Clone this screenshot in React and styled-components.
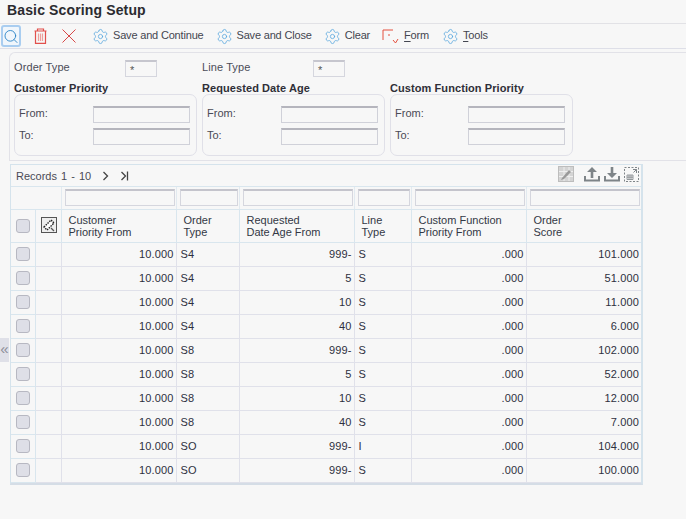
import React from "react";
import styled, { createGlobalStyle } from "styled-components";
import { Settings, Search } from "lucide-react";

const Global = createGlobalStyle`
  html, body { margin: 0; padding: 0; background: #f7f7f7; }
  body { font-family: "Liberation Sans", Arial, sans-serif; font-size: 11px; color: #3a3a44; }
`;
const Page = styled.div`
  position: relative; width: 686px; height: 519px; overflow: hidden; background: #f7f7f7;
`;
const TitleBar = styled.div`
  height: 24px; box-sizing: border-box; padding: 2px 0 0 7px;
  border-bottom: 1px solid #e2e2e6;
  font-size: 14px; font-weight: 700; line-height: 17px; letter-spacing: .14px; color: #2b2b30;
`;
const Toolbar = styled.div`
  display: flex; align-items: center; height: 25px; box-sizing: border-box;
  border-bottom: 1px solid #dedfe8;
`;
const IconBtn = styled.div`
  width: ${p => p.$w}px; height: 22px; margin-left: ${p => p.$ml || 0}px; flex: none;
  display: flex; align-items: center; justify-content: center; box-sizing: border-box;
  ${p => p.$active && `border: 2px solid #a9cdf0; border-radius: 3px; background: #f0f6fc;`}
`;
const Action = styled.div`
  display: flex; align-items: center; margin-left: ${p => p.$ml}px; flex: none;
  line-height: 14px; color: #444650; letter-spacing: -.18px;
  svg { margin-right: ${p => p.$gap}px; }
  span { margin-top: -3px; }
  u { text-underline-offset: 2px; }
`;
const FormPanel = styled.div`
  margin: 3px 0 0 9px; height: 109px; box-sizing: border-box; position: relative;
  border: 1px solid #e2e2e8; border-right: 0; border-top-left-radius: 6px;
  padding: 6px 0 0 4px;
`;
const TopRow = styled.div`
  display: flex; height: 18px; align-items: center;
`;
const TopField = styled.div`
  display: flex; width: 188px; align-items: center;
`;
const TopLabel = styled.span`
  width: 111px; flex: none; color: #4b4c58; letter-spacing: .1px; margin-top: -3px;
`;
const SmallInput = styled.div`
  width: 32px; height: 17px; box-sizing: border-box; border: 1px solid #d5d6de; border-top: 2px solid #c6c6ce;
  background: #f7f7f7; padding: 2px 0 0 4px; line-height: 12px; font-size: 11px; color: #555;
`;
const Groups = styled.div`
  display: flex; gap: 5px; margin-top: 4px;
`;
const Group = styled.div`
  width: 183px; flex: none;
`;
const GroupTitle = styled.div`
  font-weight: 700; line-height: 14px; height: 14px; color: #2f2f38; letter-spacing: .08px; white-space: nowrap;
`;
const GroupBox = styled.div`
  height: 62px; box-sizing: border-box; border: 1px solid #e0e0e8; border-radius: 7px;
  padding: 11px ${p => p.$inset}px 0 4px; margin-top: -1px; display: flex; flex-direction: column; gap: 5px;
`;
const FieldRow = styled.div`
  display: flex; align-items: center; justify-content: space-between; height: 17px; color: #4a4a56;
  span { margin-top: -4px; }
`;
const Input = styled.div`
  width: 97px; height: 17px; box-sizing: border-box; border: 1px solid #d0d1d9; border-top: 2px solid #b5b5bd;
  background: #f7f7f7;
`;
const GridWrap = styled.div`
  margin: 3px 0 0 10px; width: 633px; box-sizing: border-box;
  border: 1px solid #d5e3ec; border-bottom: 2px solid #d5dde6; border-right: 2px solid #d5e3ec;
`;
const GridBar = styled.div`
  height: 22px; display: flex; align-items: center; padding-left: 5px; position: relative;
  color: #4a4a56; border-bottom: 1px solid #d9e6ee; box-sizing: border-box; word-spacing: 1px;
`;
const Pager = styled.span`
  margin-left: ${p => p.$ml || 0}px; display: flex;
`;
const BarIcons = styled.div`
  position: absolute; right: 2px; top: 1px; display: flex; align-items: center;
`;
const Table = styled.table`
  border-collapse: collapse; table-layout: fixed; width: 630px;
`;
const Th = styled.th`
  height: 33px; padding: 0 ${p => p.$tight ? 0 : 6}px 0 ${p => p.$tight ? 5 : 7}px; box-sizing: border-box;
  border-bottom: 1px solid #d9e6ee; border-left: 1px solid #d9e6ee;
  font-weight: 400; text-align: left; vertical-align: middle; line-height: 12px; color: #333845; white-space: pre-line;
  &:first-child { border-left: 0; padding: 0; }
`;
const FilterCell = styled.td`
  height: 22px; padding: 0 1px 0 3px; box-sizing: border-box; border-bottom: 1px solid #d9e6ee;
  border-left: 1px solid ${p => p.$plain ? "transparent" : "#e2eaf0"};
  &:first-child { border-left: 0; }
`;
const FilterInput = styled.div`
  height: 17px; box-sizing: border-box; border: 1px solid #d5d6de; border-top: 2px solid #c4c4cc; background: #f7f7f7;
`;
const Td = styled.td`
  height: 24px; padding: 0 ${p => p.$right ? 2 : 3}px 0 ${p => p.$right ? 3 : 4}px; box-sizing: border-box; border-bottom: 1px solid #e0e1ea; border-left: 1px solid #e0e1ea;
  text-align: ${p => p.$right ? "right" : "left"}; color: #2e3040; letter-spacing: .15px;
  &:first-child { border-left: 0; padding: 0; border-bottom-color: #d9e6ee; }
  &:nth-child(2) { border-left-color: #d9e6ee; }
`;
const Check = styled.div`
  width: 12px; height: 12px; margin: 0 auto; border: 1px solid #b7b8c2; border-radius: 3px; background: #dedfe7;
`;
const Collapse = styled.div`
  position: absolute; left: 0; top: 338px; width: 9px; height: 24px; background: #dfe0e8;
  color: #8d8e98; font-size: 15px; line-height: 22px; text-align: center; overflow: hidden;
`;

const gear = <Settings size={17} strokeWidth={1.1} color="#58a6dd" />;

const FormIcon = () => (
  <svg width="17" height="15" viewBox="0 0 17 15" fill="none" stroke="#e4503f" strokeWidth="1">
    <path d="M1 11V1h10M6 6h2" />
    <path d="M11 11l2.5 3L16 10" />
  </svg>
);
const Close = () => (
  <svg width="14" height="14" viewBox="0 0 14 14" stroke="#d84848" strokeWidth="1" fill="none">
    <path d="M.5.5l13 13M13.5.5l-13 13" />
  </svg>
);
const Trash = () => (
  <svg width="13" height="16" viewBox="0 0 13 16" fill="none" stroke="#e2504c" strokeWidth="1.2">
    <path d="M.5 3h12M3.5 3V1h6v2M1.5 3v12.4h10V3" />
    <path d="M4.5 5.5v7.5M6.5 5.5v7.5M8.5 5.5v7.5" stroke="#eda09c" />
  </svg>
);
const Paperclip = () => (
  <svg width="16" height="16" viewBox="0 0 16 16">
    <rect x=".5" y=".5" width="15" height="15" fill="#eee" stroke="#555" />
    <path d="M3 10L10 3l3 3-7 7z" fill="#fff" stroke="#222" strokeWidth="1.4" strokeDasharray="1.5 1" />
    <path d="M10 11l3 3" stroke="#555" strokeWidth="1.3" />
  </svg>
);
const EditGrid = () => (
  <svg width="16" height="16" viewBox="0 0 16 16">
    <rect x=".5" y=".5" width="15" height="15" fill="#d4d4d4" stroke="#bdbdbd" />
    <path d="M1 5.5h14M1 10.5h14M6 1v14M11 1v14" stroke="#efefef" />
    <path d="M4 12l7-8 2 2-7 7-3 1z" fill="#9a9a9a" />
  </svg>
);
const Tray = ({ down }) => (
  <svg width="16" height="16" viewBox="0 0 16 16" fill="#7e8488">
    <path d="M0 10h2v3.5h12V10h2v5.5H0z" />
    <path d={down ? "M6.7 1h2.6v6H13L8 12 3 7h3.7z" : "M6.7 12h2.6V6H13L8 1 3 6h3.7z"} />
  </svg>
);
const Expand = () => (
  <svg width="15" height="15" viewBox="0 0 15 15" fill="none" stroke="#7e8488">
    <rect x=".5" y=".5" width="14" height="14" strokeDasharray="2 1.5" />
    <path d="M9 2.5h3.5V6M12.5 2.5L9.5 5.5" />
    <path d="M3 8h6v4.5H3zM5 8v4.5M7 8v4.5M3 10.2h6" strokeWidth=".8" />
  </svg>
);

const cols = [24, 26, 115, 63, 115, 57, 115, 115];
const rows = [
  ["S4", "999-", "S", "101.000"],
  ["S4", "5", "S", "51.000"],
  ["S4", "10", "S", "11.000"],
  ["S4", "40", "S", "6.000"],
  ["S8", "999-", "S", "102.000"],
  ["S8", "5", "S", "52.000"],
  ["S8", "10", "S", "12.000"],
  ["S8", "40", "S", "7.000"],
  ["SO", "999-", "I", "104.000"],
  ["SO", "999-", "S", "100.000"],
];
const heads = ["Customer\nPriority From", "Order\nType", "Requested\nDate Age From", "Line\nType", "Custom Function\nPriority From", "Order\nScore"];

const RangeGroup = ({ title, inset = 6 }) => (
  <Group>
    <GroupTitle>{title}</GroupTitle>
    <GroupBox $inset={inset}>
      <FieldRow><span>From:</span><Input /></FieldRow>
      <FieldRow><span>To:</span><Input /></FieldRow>
    </GroupBox>
  </Group>
);

export default function App() {
  return (
    <Page>
      <Global />
      <TitleBar>Basic Scoring Setup</TitleBar>
      <Toolbar>
        <IconBtn $w={20} $ml={1} $active><Search size={17} strokeWidth={1.4} color="#2f86c8" /></IconBtn>
        <IconBtn $w={14} $ml={12}><Trash /></IconBtn>
        <IconBtn $w={14} $ml={15}><Close /></IconBtn>
        <Action $ml={16} $gap={4}>{gear}<span>Save and Continue</span></Action>
        <Action $ml={12} $gap={4}>{gear}<span>Save and Close</span></Action>
        <Action $ml={12} $gap={4}>{gear}<span>Clear</span></Action>
        <Action $ml={12} $gap={5}><FormIcon /><span><u>F</u>orm</span></Action>
        <Action $ml={13} $gap={4}>{gear}<span><u>T</u>ools</span></Action>
      </Toolbar>
      <FormPanel>
        <TopRow>
          <TopField><TopLabel>Order Type</TopLabel><SmallInput>*</SmallInput></TopField>
          <TopField><TopLabel>Line Type</TopLabel><SmallInput>*</SmallInput></TopField>
        </TopRow>
        <Groups>
          <RangeGroup title="Customer Priority" />
          <RangeGroup title="Requested Date Age" />
          <RangeGroup title="Custom Function Priority" inset={7} />
        </Groups>
      </FormPanel>
      <GridWrap>
        <GridBar>
          Records 1 - 10
          <Pager $ml={10}>
            <svg width="10" height="10" viewBox="0 0 10 10" fill="none" stroke="#444" strokeWidth="1.3"><path d="M2.5 1l4 4-4 4" /></svg>
          </Pager>
          <Pager $ml={9}>
            <svg width="10" height="10" viewBox="0 0 10 10" fill="none" stroke="#444" strokeWidth="1.3"><path d="M1.5 1l4 4-4 4M7.5 .5v9" /></svg>
          </Pager>
          <BarIcons>
            <EditGrid />
            <Pager $ml={10}><Tray /></Pager>
            <Pager $ml={4}><Tray down /></Pager>
            <Pager $ml={4}><Expand /></Pager>
          </BarIcons>
        </GridBar>
        <Table>
          <colgroup>{cols.map((w, i) => <col key={i} style={{ width: w }} />)}</colgroup>
          <thead>
            <tr>
              <FilterCell $plain />
              <FilterCell $plain />
              {heads.map((h, i) => <FilterCell key={i}><FilterInput /></FilterCell>)}
            </tr>
            <tr>
              <Th><Check /></Th>
              <Th $tight><Paperclip /></Th>
              {heads.map((h, i) => <Th key={i}>{h}</Th>)}
            </tr>
          </thead>
          <tbody>
            {rows.map((r, i) => (
              <tr key={i}>
                <Td><Check /></Td>
                <Td />
                <Td $right>10.000</Td>
                <Td>{r[0]}</Td>
                <Td $right>{r[1]}</Td>
                <Td>{r[2]}</Td>
                <Td $right>.000</Td>
                <Td $right>{r[3]}</Td>
              </tr>
            ))}
          </tbody>
        </Table>
      </GridWrap>
      <Collapse>«</Collapse>
    </Page>
  );
}
